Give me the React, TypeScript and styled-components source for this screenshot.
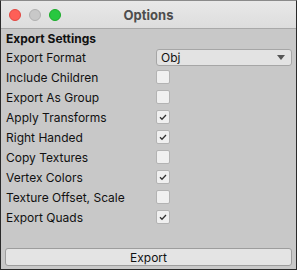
import styled, { createGlobalStyle } from "styled-components";

const Global = createGlobalStyle`
  html, body {
    margin: 0;
    padding: 0;
    background: #1e1e1e;
  }
  * {
    box-sizing: border-box;
  }
`;

const Window = styled.div`
  width: 297px;
  height: 270px;
  display: flex;
  flex-direction: column;
  border: 1px solid #2a2a2a;
  border-top-color: #8a8a8a;
  background: #c8c8c8;
  font-family: Inter, "Noto Sans", "Liberation Sans", sans-serif;
  font-size: 12px;
  color: #111;
  overflow: hidden;
`;

const TitleBar = styled.div`
  position: relative;
  height: 28px;
  flex: none;
  display: flex;
  align-items: center;
  justify-content: center;
  background: linear-gradient(#e8e8e8, #dddddd);
  border-bottom: 1px solid #a9a9a9;
`;

const Lights = styled.div`
  position: absolute;
  left: 8px;
  top: 8px;
  display: flex;
  gap: 8px;
`;

const Light = styled.span<{ $color: string; $edge: string }>`
  width: 12px;
  height: 12px;
  border-radius: 50%;
  background: ${(p) => p.$color};
  border: 0.5px solid ${(p) => p.$edge};
`;

const Title = styled.div`
  font-weight: 700;
  font-size: 13px;
  color: #4d4d4d;
`;

const Body = styled.div`
  flex: 1;
  display: flex;
  flex-direction: column;
  padding: 1px 0 0;
`;

const SectionTitle = styled.div`
  height: 17px;
  padding-left: 5px;
  font-weight: 700;
  font-size: 12px;
  line-height: 17px;
`;

const Row = styled.div`
  height: 20px;
  display: grid;
  grid-template-columns: 155px 1fr;
  align-items: center;
  padding-right: 4px;
`;

const Label = styled.div`
  padding-left: 5px;
  white-space: nowrap;
`;

const Dropdown = styled.div`
  height: 17px;
  display: flex;
  align-items: center;
  justify-content: space-between;
  padding: 0 6px 0 4px;
  background: #e3e3e3;
  border: 1px solid #a6a6a6;
  border-radius: 3px;
`;

const Arrow = styled.span`
  width: 0;
  height: 0;
  border-left: 4px solid transparent;
  border-right: 4px solid transparent;
  border-top: 5px solid #555;
`;

const Box = styled.div`
  width: 14px;
  height: 14px;
  display: flex;
  align-items: center;
  justify-content: center;
  background: #f0f0f0;
  border: 1px solid #b3b3b3;
  border-radius: 2px;
`;

const Spacer = styled.div`
  flex: 1;
`;

const Footer = styled.div`
  padding: 0 4px 3px;
`;

const Button = styled.div`
  height: 18px;
  display: flex;
  align-items: center;
  justify-content: center;
  background: #e4e4e4;
  border: 1px solid #9d9d9d;
  border-radius: 3px;
`;

function Check({ on }: { on: boolean }) {
  return (
    <Box>
      {on && (
        <svg width="10" height="10" viewBox="0 0 10 10">
          <path d="M2 5.2 L4 7.2 L8 3" fill="none" stroke="#333" strokeWidth="1.3" />
        </svg>
      )}
    </Box>
  );
}

const options: [string, boolean][] = [
  ["Include Children", false],
  ["Export As Group", false],
  ["Apply Transforms", true],
  ["Right Handed", true],
  ["Copy Textures", false],
  ["Vertex Colors", true],
  ["Texture Offset, Scale", false],
  ["Export Quads", true],
];

export default function App() {
  return (
    <>
      <Global />
      <Window>
        <TitleBar>
          <Lights>
            <Light $color="#fe5f57" $edge="#e14640" />
            <Light $color="#c8c8c8" $edge="#b0b0b0" />
            <Light $color="#28c840" $edge="#1aab29" />
          </Lights>
          <Title>Options</Title>
        </TitleBar>
        <Body>
          <SectionTitle>Export Settings</SectionTitle>
          <Row>
            <Label>Export Format</Label>
            <Dropdown>
              <span>Obj</span>
              <Arrow />
            </Dropdown>
          </Row>
          {options.map(([name, on]) => (
            <Row key={name}>
              <Label>{name}</Label>
              <Check on={on} />
            </Row>
          ))}
          <Spacer />
          <Footer>
            <Button>Export</Button>
          </Footer>
        </Body>
      </Window>
    </>
  );
}
